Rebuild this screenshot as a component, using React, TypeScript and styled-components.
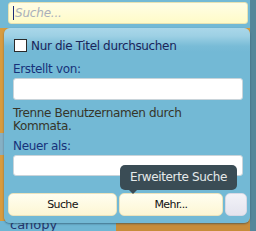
import React from "react";
import styled, { createGlobalStyle } from "styled-components";

const GlobalStyle = createGlobalStyle`
  html, body {
    margin: 0;
    padding: 0;
  }
  body {
    width: 256px;
    height: 231px;
    overflow: hidden;
    font-family: "DejaVu Sans", Verdana, sans-serif;
  }
`;

const Screen = styled.div`
  display: flex;
  width: 256px;
  height: 231px;
  background: #55879a;
`;

const Page = styled.div`
  position: relative;
  width: 250px;
  display: flex;
  flex-direction: column;
`;

const TopBar = styled.div`
  height: 28px;
  box-sizing: border-box;
  padding: 2px 2px 0 8px;
  background: #73b9d5;
`;

const SearchBox = styled.div`
  display: flex;
  align-items: center;
  height: 22px;
  box-sizing: border-box;
  padding-left: 4px;
  border: 1px solid #e6e2b4;
  border-radius: 3px;
  background: linear-gradient(#fffde6, #fffbc8);
`;

const Caret = styled.span`
  width: 1px;
  height: 14px;
  background: #1c2a78;
  margin-right: 1px;
`;

const Placeholder = styled.span`
  font-size: 12px;
  font-style: italic;
  color: #aab0ba;
  letter-spacing: -0.2px;
`;

const Behind = styled.div`
  flex: 1;
  display: flex;
  flex-direction: column;
  background: #d89b3e;
`;

const BehindBand = styled.div`
  margin-top: 105px;
  height: 22px;
  background: #86b0c4;
`;

const BehindRow = styled.div`
  margin-top: auto;
  display: flex;
  height: 10px;
`;

const RowLabel = styled.div`
  width: 116px;
  padding-left: 10px;
  box-sizing: border-box;
  background: #6fb6d3;
  font-size: 13px;
  line-height: 8px;
  color: #23356e;
  overflow: hidden;
`;

const RowRest = styled.div`
  flex: 1;
  background: #c78c3a;
`;

const Dropdown = styled.div`
  position: absolute;
  top: 28px;
  left: 4px;
  width: 246px;
  height: 195px;
  border-radius: 6px;
  background: linear-gradient(#aad7e9 0, #9dd0e4 8px, #79bcd7 18px, #73b9d5 24px);
  box-shadow: 0 1px 2px rgba(30, 60, 80, 0.55);
  display: flex;
  flex-direction: column;
`;

const Form = styled.div`
  display: flex;
  flex-direction: column;
  padding: 11px 7px 0 9px;
`;

const CheckRow = styled.label`
  display: flex;
  align-items: center;
  height: 13px;
  padding-left: 1px;
  font-size: 12px;
  letter-spacing: -0.35px;
  color: #1a255a;
`;

const CheckBox = styled.span`
  width: 13px;
  height: 13px;
  box-sizing: border-box;
  border: 1px solid #2a2a2a;
  background: #fff;
  margin-right: 4px;
`;

const FieldLabel = styled.div<{ $gap: number }>`
  margin-top: ${(p) => p.$gap}px;
  font-size: 12px;
  line-height: 15px;
  letter-spacing: -0.35px;
  color: #17327a;
`;

const TextField = styled.div<{ $h: number }>`
  margin-top: 1px;
  height: ${(p) => p.$h}px;
  box-sizing: border-box;
  border: 1px solid #c9d4da;
  border-radius: 3px;
  background: #fff;
`;

const Hint = styled.div`
  margin-top: 7px;
  font-size: 12px;
  line-height: 13px;
  letter-spacing: -0.35px;
  color: #36352a;
`;

const ButtonRow = styled.div`
  display: flex;
  gap: 2px;
  margin-top: 17px;
  padding: 0 3px 0 4px;
`;

const Button = styled.button<{ $w: number; $plain?: boolean }>`
  width: ${(p) => p.$w}px;
  height: 23px;
  padding: 0;
  border: 1px solid ${(p) => (p.$plain ? "#d6d8e4" : "#ebe3bd")};
  border-radius: 5px;
  background: ${(p) =>
    p.$plain
      ? "linear-gradient(#f2f2f8, #e4e4ee)"
      : "linear-gradient(#fffef0, #fdf6d4)"};
  font-family: "DejaVu Sans", Verdana, sans-serif;
  font-size: 11px;
  letter-spacing: -0.6px;
  color: #111;
`;

const Tooltip = styled.div`
  position: absolute;
  left: 116px;
  top: 137px;
  width: 117px;
  height: 25px;
  box-sizing: border-box;
  border-radius: 5px;
  background: #3a4c55;
  color: #e6eaea;
  font-size: 12px;
  letter-spacing: -0.35px;
  line-height: 25px;
  text-align: center;

  &::after {
    content: "";
    position: absolute;
    left: 9px;
    bottom: -4px;
    border-left: 4px solid transparent;
    border-right: 4px solid transparent;
    border-top: 4px solid #3a4c55;
  }
`;

export default function App() {
  return (
    <Screen>
      <GlobalStyle />
      <Page>
        <TopBar>
          <SearchBox>
            <Caret />
            <Placeholder>Suche...</Placeholder>
          </SearchBox>
        </TopBar>
        <Behind>
          <BehindBand />
          <BehindRow>
            <RowLabel>canopy</RowLabel>
            <RowRest />
          </BehindRow>
        </Behind>
        <Dropdown>
          <Form>
            <CheckRow>
              <CheckBox />
              Nur die Titel durchsuchen
            </CheckRow>
            <FieldLabel $gap={10}>Erstellt von:</FieldLabel>
            <TextField $h={22} />
            <Hint>
              Trenne Benutzernamen durch
              <br />
              Kommata.
            </Hint>
            <FieldLabel $gap={6}>Neuer als:</FieldLabel>
            <TextField $h={21} />
          </Form>
          <ButtonRow>
            <Button $w={109}>Suche</Button>
            <Button $w={104}>Mehr...</Button>
            <Button $w={22} $plain />
          </ButtonRow>
          <Tooltip>Erweiterte Suche</Tooltip>
        </Dropdown>
      </Page>
    </Screen>
  );
}
